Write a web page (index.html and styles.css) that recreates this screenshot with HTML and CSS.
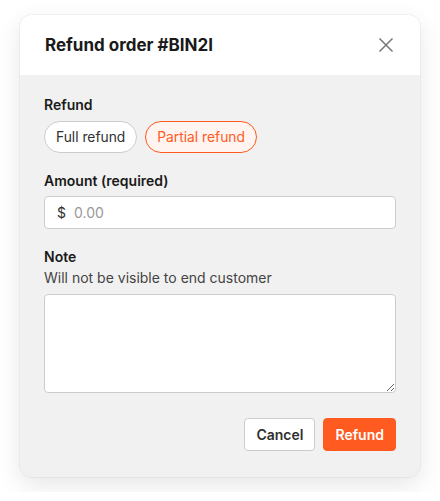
FILE: index.html
```html
<!DOCTYPE html>
<html lang="en">
<head>
  <meta charset="UTF-8">
  <title>Refund order</title>
  <link rel="stylesheet" href="styles.css">
</head>
<body>
  <div class="modal">
    <div class="modal-header">
      <h1>Refund order #BIN2I</h1>
      <button class="close" aria-label="Close">
        <svg width="16" height="16" viewBox="0 0 16 16"><path d="M1.5 1.5l13 13M14.5 1.5l-13 13" stroke="#777" stroke-width="1.5" fill="none"/></svg>
      </button>
    </div>

    <div class="modal-body">
      <div class="field">
        <label>Refund</label>
        <div class="pills">
          <button class="pill">Full refund</button>
          <button class="pill active">Partial refund</button>
        </div>
      </div>

      <div class="field">
        <label for="amount">Amount (required)</label>
        <div class="money">
          <span class="prefix">$</span>
          <input type="text" id="amount" placeholder="0.00">
        </div>
      </div>

      <div class="field">
        <label for="note">Note</label>
        <p class="hint">Will not be visible to end customer</p>
        <textarea id="note"></textarea>
      </div>

      <div class="actions">
        <button class="btn">Cancel</button>
        <button class="btn primary">Refund</button>
      </div>
    </div>
  </div>
</body>
</html>
```

FILE: styles.css
```css
body {
  margin: 0;
  padding: 15px 20px;
  background: #fff;
  font-family: 'Inter', sans-serif;
  color: #303030;
}

.modal {
  width: 400px;
  border-radius: 12px;
  overflow: hidden;
  background: #f1f1f1;
  box-shadow: 0 0 0 1px rgba(0, 0, 0, 0.04), 0 8px 24px rgba(0, 0, 0, 0.1);
}

.modal-header {
  height: 60px;
  background: #fff;
  display: flex;
  align-items: center;
  justify-content: space-between;
  padding: 0 26px 0 25px;
}

.modal-header h1 {
  margin: 0;
  font-size: 17px;
  font-weight: 700;
  color: #1a1a1a;
}

.close {
  border: none;
  background: none;
  padding: 0;
  display: flex;
  cursor: pointer;
}

.modal-body {
  padding: 20px 24px 26px;
}

.field {
  margin-bottom: 18px;
}

.field label {
  display: block;
  font-size: 14px;
  font-weight: 600;
  line-height: 20px;
  color: #1a1a1a;
  margin-bottom: 6px;
}

.hint {
  margin: -6px 0 5px;
  font-size: 14px;
  line-height: 22px;
  color: #444;
}

.pills {
  display: flex;
  gap: 8px;
}

.pill {
  height: 32px;
  padding: 0 11px;
  border: 1px solid #ccc;
  border-radius: 16px;
  background: #fff;
  font-family: inherit;
  font-size: 13.8px;
  color: #303030;
}

.pill.active {
  border-color: #ff5a1f;
  background: #fff4ef;
  color: #ff5a1f;
}

.money {
  height: 33px;
  display: flex;
  align-items: center;
  background: #fff;
  border: 1px solid #ccc;
  border-radius: 4px;
  padding: 0 12px;
  box-sizing: border-box;
}

.field label + .money {
  margin-top: -1px;
}

.prefix {
  font-size: 14px;
  margin-right: 8px;
}

.money input {
  border: none;
  outline: none;
  flex: 1;
  font-family: inherit;
  font-size: 14px;
  padding: 0;
}

.money input::placeholder {
  color: #999;
}

textarea {
  display: block;
  width: 100%;
  height: 99px;
  box-sizing: border-box;
  border: 1px solid #ccc;
  border-radius: 4px;
  background: #fff;
  font-family: inherit;
  font-size: 14px;
}

.actions {
  display: flex;
  justify-content: flex-end;
  gap: 8px;
  margin-top: 25px;
}

.btn {
  height: 33px;
  padding: 0 11px;
  border: 1px solid #ccc;
  border-radius: 4px;
  background: #fff;
  font-family: inherit;
  font-size: 14px;
  font-weight: 600;
  color: #303030;
}

.btn.primary {
  background: #ff5a1f;
  border-color: #ff5a1f;
  color: #fff;
}
```
